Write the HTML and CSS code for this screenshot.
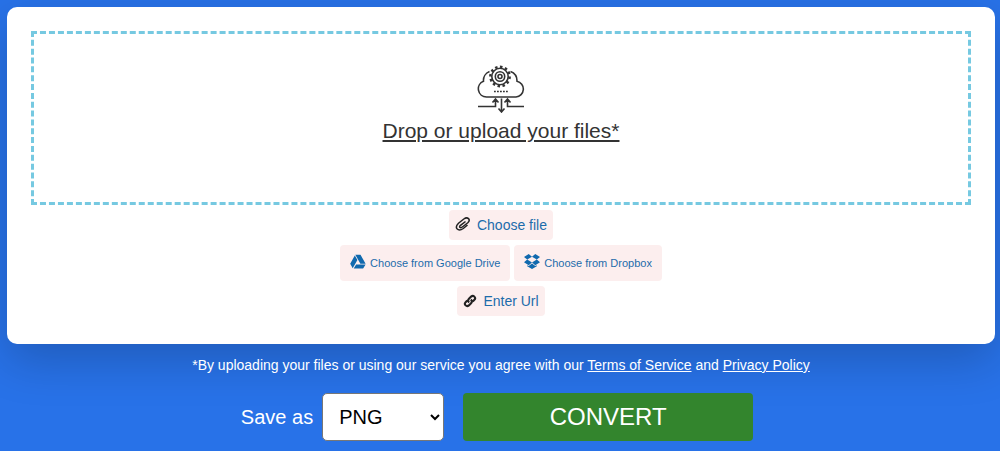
FILE: index.html
```html
<!DOCTYPE html>
<html lang="en">
<head>
	<meta charset="utf-8">
	<meta name="viewport" content="width=device-width, initial-scale=1">
	<title>Convert files</title>
	<link rel="stylesheet" href="styles.css">
</head>
<body>
	<form id="converter" action="#" method="post" onsubmit="return false;">
		<div class="upload-box">
			<button type="button" class="drop-zone">
				<svg class="cloud" viewBox="0 0 48 48" aria-hidden="true">
					<path d="M12 32H9.500A8.200 8.200 0 0 1 6.500 16.200A9.500 9.500 0 0 1 12.500 6.500M33.500 6.500A10 10 0 0 1 40 16.200A8 8 0 0 1 39 32H12"/>
					<circle class="teeth" cx="23" cy="11.500" r="9.600" pathLength="96"/>
					<circle cx="23" cy="11.500" r="8.200"/>
					<circle cx="23" cy="11.500" r="4.700"/>
					<circle cx="23" cy="11.500" r="2"/>
					<path class="dots" d="M17 26.500h14"/>
					<path d="M1 41.500h17.500V34.500M15.500 37.500l3-3.500l3 3.500M47 41.500H30.500V34.500M27.500 37.500l3-3.500l3 3.500M24.500 33.500V46.500M21.500 43.500l3 3.500l3-3.500"/>
				</svg>
				<span>Drop or upload your files*</span>
			</button>
			<div class="sources">
				<button type="button" class="source">
					<svg class="clip" viewBox="0 0 16 16" aria-hidden="true">
						<path d="M10.500 5.500L5.500 9.300Q4 10.800 5 11.500Q6 12.200 8 10.500L12.800 6.800Q15.200 4.300 13.500 2.600Q11.700 1 8.800 3L3.500 7.200Q.2 10.500 2 12.800Q4.300 15.300 8.300 12.500L12.500 9"/>
					</svg>
					Choose file
				</button>
				<div class="cloud-row">
					<button type="button" class="source small">
						<svg class="brand" viewBox="0 0 16 14" aria-hidden="true">
							<path d="M5.300.3h5.200l5.100 8.900h-5.200zM4.800 1.100L7.400 5.600L2.700 13.700L.2 9.300zM6.100 10h9.500L13.100 14H3.700z"/>
						</svg>
						Choose from Google Drive
					</button>
					<button type="button" class="source small">
						<svg class="brand" viewBox="0 0 16 15" aria-hidden="true">
							<path d="M4.700 0L8 2.700L3.200 5.600L0 3.100zM11.300 0L16 3.100L12.800 5.600L8 2.700zM0 8.200L3.200 5.600L8 8.600L4.700 11.200zM16 8.200L12.800 5.600L8 8.600L11.300 11.200zM3.200 11.200L4.700 12.100L8 9.400L11.300 12.100L12.800 11.200V12.200L8 15L3.200 12.200z"/>
						</svg>
						Choose from Dropbox
					</button>
				</div>
				<button type="button" class="source">
					<svg class="link" viewBox="0 0 16 16" aria-hidden="true">
						<path d="M7 9.800Q4.800 7.500 6.800 5.500L9.300 3Q11.200 1.200 13 3Q14.800 4.800 13 6.700L11.200 8.500M9 6.200Q11.200 8.500 9.200 10.500L6.700 13Q4.800 14.800 3 13Q1.200 11.200 3 9.300L4.800 7.500"/>
					</svg>
					Enter Url
				</button>
			</div>
		</div>

		<p class="terms">*By uploading your files or using our service you agree with our <a href="#terms">Terms of Service</a> and <a href="#privacy">Privacy Policy</a></p>

		<div class="convert-row">
			<label for="format">Save as</label>
			<select id="format" name="format">
				<option value="png">PNG</option>
				<option value="jpg">JPG</option>
				<option value="pdf">PDF</option>
			</select>
			<button type="submit" class="convert">CONVERT</button>
		</div>
	</form>
</body>
</html>
```
FILE: styles.css
```css
* {
	box-sizing: border-box;
}

body {
	margin: 0;
	background: #2872e8;
	color: #fff;
	font-family: "Liberation Sans", Arial, sans-serif;
}

button,
select {
	font-family: inherit;
}

button {
	border: 0;
	cursor: pointer;
}

#converter {
	padding: 7px 5px 10px 7px;
}

.upload-box {
	padding: 24px 24px 28px;
	border-radius: 10px;
	background: #fff;
	box-shadow: 0 16px 48px rgba(0, 0, 0, .2);
}

.drop-zone {
	display: flex;
	flex-direction: column;
	align-items: center;
	gap: 4px;
	width: 100%;
	padding: 31px 16px 57px;
	border: 3px dashed #76c9e1;
	background: none;
	color: #333;
	font-size: 21px;
	line-height: 28px;
	text-decoration: underline;
}

.drop-zone svg {
	width: 48px;
	height: 48px;
}

svg path,
svg circle {
	fill: none;
	stroke: #222;
	stroke-width: 2;
}

svg.cloud path,
svg.cloud circle {
	stroke: #333;
	stroke-width: 1.6;
}

svg.cloud .teeth {
	stroke-width: 2.6;
	stroke-dasharray: 4 4;
}

svg.cloud .dots {
	stroke-dasharray: 1.8 1.2;
}

/* upload buttons */
.sources {
	display: flex;
	flex-direction: column;
	align-items: center;
	gap: 5px;
	padding-top: 5px;
}

.cloud-row {
	display: flex;
	gap: 4px;
}

.source {
	display: flex;
	align-items: center;
	gap: 6px;
	padding: 0 6px;
	border-radius: 4px;
	background: #fceeee;
	color: #1c6cab;
	font-size: 14px;
	line-height: 30px;
}

.source svg {
	width: 14px;
	height: 14px;
}

.source .clip {
	width: 16px;
	height: 16px;
	margin-bottom: 2px;
}

.source .clip path {
	stroke-width: 1.5;
}

.source .link path {
	stroke-width: 2.4;
}

.source.small {
	gap: 4px;
	padding: 0 10px;
	font-size: 11px;
	line-height: 36px;
}

.source .brand {
	width: 16px;
	height: 15px;
	margin-bottom: 4px;
}

.source .brand path {
	fill: #1069ae;
	stroke: none;
}

.terms {
	margin: 12px 0 19px;
	font-size: 14px;
	line-height: 18px;
	text-align: center;
}

.terms a {
	color: #fff;
}

.convert-row {
	display: flex;
	align-items: center;
	justify-content: center;
	padding-right: 8px;
	font-size: 20px;
}

#format {
	width: 122px;
	height: 48px;
	margin: 0 19px 0 9px;
	padding: 0 12px;
	border: 1px solid #777;
	border-radius: 5px;
	background-color: #fff;
	color: #000;
	font-size: 20px;
}

.convert {
	width: 290px;
	height: 48px;
	border-radius: 4px;
	background: #33852d;
	color: #fff;
	font-size: 24px;
}
```
